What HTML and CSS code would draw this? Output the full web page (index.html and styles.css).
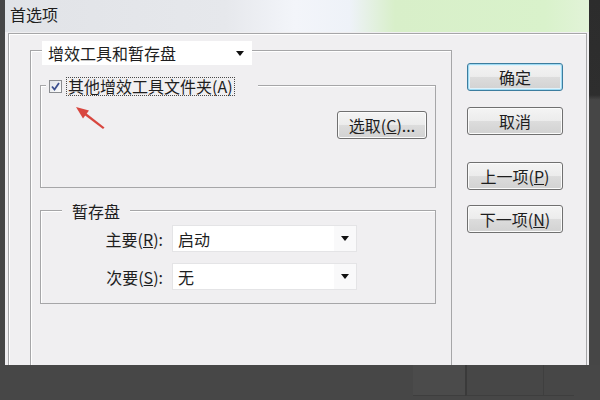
FILE: index.html
```html
<!DOCTYPE html>
<html lang="zh-CN">
<head>
    <meta charset="UTF-8">
    <meta name="viewport" content="width=device-width, initial-scale=1.0">
    <title>首选项</title>
    <link rel="stylesheet" href="styles.css">
</head>
<body>
    <div class="screen">
        <div class="dialog">
            <div class="titlebar">首选项</div>

            <div class="client">
                <div class="panel">
                    <div class="combo combo-head">
                        <span class="combo-text">增效工具和暂存盘</span>
                        <span class="combo-btn"><i class="caret"></i></span>
                    </div>

                    <div class="group group-plugins">
                        <div class="legend legend-check">
                            <span class="checkbox">
                                <svg width="11" height="11" viewBox="0 0 11 11">
                                    <path d="M2 5.5 L4.5 8.5 L9 2" fill="none" stroke="#3b4f8f" stroke-width="1.8"/>
                                </svg>
                            </span>
                            <span class="focus-label">其他增效工具文件夹(A)</span>
                        </div>
                        <div class="plugins-body">
                            <button class="btn btn-pick">选取(<u>C</u>)...</button>
                        </div>
                    </div>

                    <div class="group group-scratch">
                        <div class="legend legend-text">暂存盘</div>
                        <div class="field-row">
                            <span class="field-label">主要(<u>R</u>):</span>
                            <div class="combo combo-field">
                                <span class="combo-text">启动</span>
                                <span class="combo-btn"><i class="caret"></i></span>
                            </div>
                        </div>
                        <div class="field-row">
                            <span class="field-label">次要(<u>S</u>):</span>
                            <div class="combo combo-field">
                                <span class="combo-text">无</span>
                                <span class="combo-btn"><i class="caret"></i></span>
                            </div>
                        </div>
                    </div>
                </div>

                <div class="actions">
                    <button class="btn btn-default">确定</button>
                    <button class="btn btn-cancel">取消</button>
                    <button class="btn btn-prev">上一项(<u>P</u>)</button>
                    <button class="btn btn-next">下一项(<u>N</u>)</button>
                </div>
            </div>

            <!-- 标注箭头 -->
            <svg class="mark" width="40" height="32" viewBox="70 100 40 32">
                <path d="M86 113 L104.5 127.5 L103 129 L84.5 115 Z" fill="#d8463f"/>
                <path d="M76 107 L89 110.5 L83 118.5 Z" fill="#d8463f"/>
            </svg>
        </div>
        <div class="side"></div>
    </div>

    <div class="taskbar">
        <div class="task-cell"></div>
        <div class="task-cell task-wide"></div>
        <div class="task-cell task-end"></div>
    </div>
</body>
</html>
```

FILE: styles.css
```css
:root {
    --face: #f0eff1;
    --line: #a6a6a8;
    --dark: #474747;
    --text: #1e1e1e;
}

body {
    margin: 0;
    height: 400px;
    overflow: hidden;
    background: var(--dark);
    font-family: "Noto Sans CJK SC", "Microsoft YaHei", sans-serif;
    font-size: 16px;
    color: var(--text);
}

.screen {
    display: flex;
    height: 365px;
    padding-left: 5px;
}

.dialog {
    position: relative;
    width: 584px;
    height: 365px;
    overflow: hidden;
    background: var(--face);
}

.side {
    flex: 1;
    background: linear-gradient(180deg, #2c2c2c 0, #2e2e2e 95px, #464646 100px);
}

.titlebar {
    height: 32px;
    box-sizing: border-box;
    padding-left: 5px;
    line-height: 29px;
    background: linear-gradient(90deg, #e1e3e7 0, #e6e8ec 220px, #f3f5fa 290px, #eef2f8 345px, #d8efc9 390px, #d9f2cb 540px, #e2f3d8 584px);
}

.client {
    display: flex;
    height: 360px;
    margin: 1px 2px 0 3px;
    border: 1px solid var(--line);
    box-shadow: inset 1px 1px 0 #fff;
}

.panel {
    width: 422px;
    height: 400px;
    box-sizing: border-box;
    margin: 16px 0 0 21px;
    border: 1px solid var(--line);
    box-shadow: inset 1px 1px 0 #fff;
}

/* 下拉框 */
.combo {
    display: flex;
    align-items: center;
    box-sizing: border-box;
    background: #fff;
    border: 1px solid #e4e4e6;
}

.combo-text {
    flex: 1;
    padding-left: 5px;
    line-height: 20px;
}

.combo-btn {
    display: flex;
    align-items: center;
    justify-content: center;
    width: 22px;
    align-self: stretch;
    background: #f9f9fa;
}

.caret {
    width: 0;
    height: 0;
    border-left: 4px solid transparent;
    border-right: 4px solid transparent;
    border-top: 5px solid #111;
}

.combo-head {
    width: 210px;
    height: 24px;
    margin: -10px 0 0 11px;
    border-color: #fff;
}

.combo-head .combo-btn {
    background: #fff;
}

.combo-field {
    width: 185px;
    height: 27px;
}

/* 分组框 */
.group {
    box-sizing: border-box;
    margin: 20px 15px 0 9px;
    border: 1px solid var(--line);
    box-shadow: inset 1px 1px 0 #fff;
}

.group-plugins {
    height: 103px;
}

.group-scratch {
    height: 94px;
    margin-top: 22px;
}

.legend {
    display: flex;
    align-items: center;
    height: 18px;
    margin-top: -9px;
    background: var(--face);
}

.legend-check {
    width: 212px;
    margin-left: 5px;
    gap: 4px;
}

.legend-text {
    width: fit-content;
    margin-left: 21px;
    padding: 0 10px;
    line-height: 18px;
}

.checkbox {
    display: flex;
    align-items: center;
    justify-content: center;
    width: 13px;
    height: 13px;
    margin-left: 3px;
    box-sizing: border-box;
    border: 1px solid #8a8c90;
    background: linear-gradient(135deg, #dfe2e8, #fdfdfd);
}

.focus-label {
    padding: 0 1px;
    line-height: 17px;
    border: 1px dotted #4a4a4a;
}

.plugins-body {
    display: flex;
    justify-content: flex-end;
    padding: 16px 8px 0 0;
}

.field-row {
    display: flex;
    align-items: center;
    gap: 9px;
    margin-top: 5px;
}

.field-row + .field-row {
    margin-top: 11px;
}

.field-label {
    width: 122px;
    text-align: right;
}

/* 按钮 */
.btn {
    height: 28px;
    padding: 0;
    font: inherit;
    color: var(--text);
    border: 1px solid #707070;
    border-radius: 3px;
    background: linear-gradient(180deg, #f4f4f4 0, #ececec 48%, #dcdcdc 52%, #d2d2d2 100%);
    box-shadow: inset 0 0 0 1px #fbfbfb;
    line-height: 24px;
}

.btn-pick {
    width: 90px;
}

.actions {
    display: flex;
    flex-direction: column;
    width: 96px;
    margin-left: 15px;
}

.actions .btn {
    width: 96px;
}

.btn-default {
    margin-top: 29px;
    border-color: #3c7d9f;
    box-shadow: inset 0 0 0 1px #9fdaf2, inset 0 0 0 2px #dff2fb;
}

.btn-cancel {
    margin-top: 16px;
}

.btn-prev {
    margin-top: 27px;
}

.btn-next {
    margin-top: 15px;
}

.mark {
    position: absolute;
    left: 65px;
    top: 100px;
}

/* 背后窗口的底栏 */
.taskbar {
    display: flex;
    height: 35px;
    padding-left: 413px;
}

.task-cell {
    width: 52px;
    height: 30px;
    background: #4b4b4b;
    border-bottom: 1px solid #3e3e3e;
}

.task-wide {
    width: 76px;
    border-left: 2px solid #3a3a3a;
    background: var(--dark);
}

.task-end {
    width: 30px;
    border-left: 1px solid #3f3f3f;
    background: var(--dark);
}
```
